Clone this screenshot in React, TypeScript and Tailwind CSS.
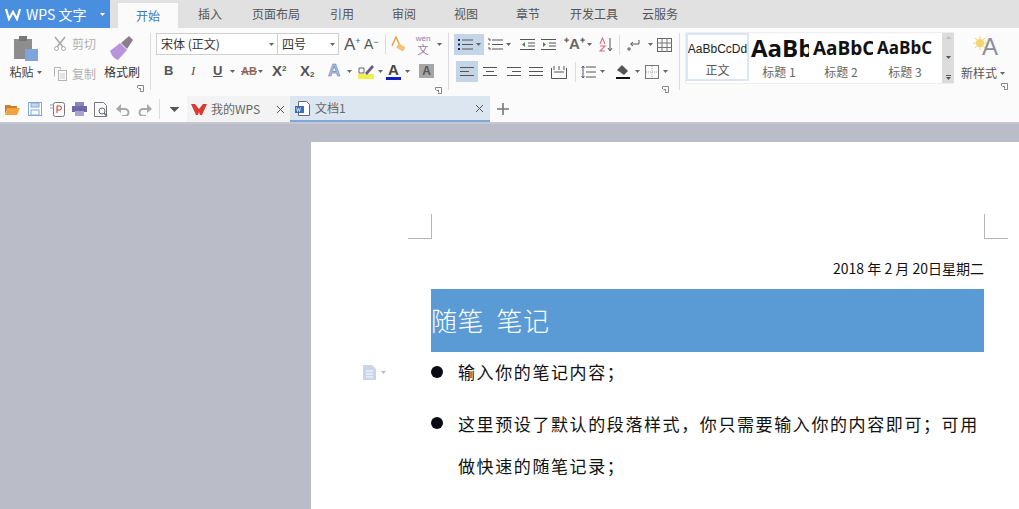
import type { ReactNode } from "react";

const cjk = "font-['Noto_Sans_CJK_SC','Liberation_Sans',sans-serif]";

function Caret({ className = "ml-[3px]", color = "#666" }: { className?: string; color?: string }) {
  return (
    <svg width="5" height="3" viewBox="0 0 5 3" className={`shrink-0 ${className}`}>
      <path d="M0 0h5L2.5 3z" fill={color} />
    </svg>
  );
}

function Icon({ w, h = 16, className = "", children }: { w: number; h?: number; className?: string; children: ReactNode }) {
  return (
    <svg width={w} height={h} viewBox={`0 0 ${w} ${h}`} className={`shrink-0 ${className}`} fill="none">
      {children}
    </svg>
  );
}

function Launcher({ className = "" }: { className?: string }) {
  return (
    <svg width="7" height="7" viewBox="0 0 7 7" className={`shrink-0 ${className}`} fill="none">
      <path d="M.5 3V.5h6v6H3" stroke="#888" />
      <path d="M1.5 3.5h2v2" stroke="#777" />
    </svg>
  );
}

function Sep({ className = "" }: { className?: string }) {
  return <div className={`w-px bg-[#dcdcdc] shrink-0 ${className}`} />;
}

function Lines({ short, align }: { short: number; align: string }) {
  return (
    <div className={`flex flex-col gap-[3px] w-[14px] ${align}`}>
      <div className="h-px w-[14px] bg-[#555]" />
      <div className="h-px bg-[#555]" style={{ width: short }} />
      <div className="h-px w-[14px] bg-[#555]" />
    </div>
  );
}

function StyleCell({ sample, label, className, width }: { sample: string; label: string; className: string; width: string }) {
  return (
    <div className={`${width} h-full flex flex-col items-center overflow-hidden shrink-0`}>
      <div className={`h-[30px] w-full flex items-center overflow-hidden whitespace-nowrap text-[#111] font-['Open_Sans',sans-serif] ${className}`}>
        {sample}
      </div>
      <div className={`text-[12px] leading-[16px] text-[#666] mt-[1px] ${cjk}`}>{label}</div>
    </div>
  );
}

function Ribbon() {
  return (
    <div className={`h-[68px] bg-[#fbfbfb] flex text-[#444] ${cjk}`}>
      {/* clipboard */}
      <div className="w-[150px] shrink-0 pl-[8px] pt-[7px] flex relative">
        <div className="w-[35px] flex flex-col items-center">
          <Icon w={26} h={27}>
            <rect x="1" y="4" width="18" height="20" fill="#8d8d8d" />
            <rect x="6" y="1" width="8" height="5" fill="#777" />
            <rect x="12" y="14" width="13" height="12" fill="#7fa6d8" />
          </Icon>
          <div className="text-[12px] leading-[16px] mt-[2px] flex items-center whitespace-nowrap">
            粘贴<Caret />
          </div>
        </div>
        <div className="ml-[10px] w-[44px] flex flex-col gap-[15px] pt-[1px] text-[12px] leading-[14px] text-[#b0b0b0]">
          <div className="flex items-center gap-[5px] whitespace-nowrap">
            <Icon w={14} h={15}>
              <path d="M2 1l8 10M12 1L4 11" stroke="#a9a9a9" strokeWidth="1.6" />
              <circle cx="3.5" cy="12.5" r="2" stroke="#a9a9a9" />
              <circle cx="10.5" cy="12.5" r="2" stroke="#a9a9a9" />
            </Icon>
            剪切
          </div>
          <div className="flex items-center gap-[5px] whitespace-nowrap">
            <Icon w={14} h={15}>
              <path d="M1.5 10.5v-9h6v2" stroke="#b5b5b5" />
              <rect x="5.5" y="4.5" width="8" height="10" stroke="#b5b5b5" />
              <path d="M7 8h5M7 10h5M7 12h5" stroke="#ccc" />
            </Icon>
            复制
          </div>
        </div>
        <div className="ml-[7px] w-[36px] flex flex-col items-center">
          <Icon w={26} h={27}>
            <path d="M1 16l10-8 7 7-9 10q-5-1-8-9z" fill="#b794dc" />
            <path d="M12 8l8-7 4 4-6 9z" fill="#8b7d8c" />
          </Icon>
          <div className="text-[12px] leading-[16px] mt-[2px] whitespace-nowrap text-[#333]">格式刷</div>
        </div>
        <Launcher className="self-end mb-[4px] ml-[-3px]" />
      </div>
      <Sep className="mt-[5px] mb-[6px]" />

      {/* font */}
      <div className="w-[297px] shrink-0 pl-[5px] pt-[5px] flex flex-col">
        <div className="flex items-center h-[22px]">
          <div className="w-[122px] h-[22px] border border-[#cfcfcf] bg-white flex items-center justify-between pl-[4px] pr-[3px] text-[12px] text-[#333]">
            宋体 (正文)<Caret />
          </div>
          <div className="w-[61px] h-[22px] border border-l-0 border-[#cfcfcf] bg-white flex items-center justify-between pl-[4px] pr-[3px] text-[12px] text-[#333]">
            四号<Caret />
          </div>
          <div className="ml-[5px] w-[18px] text-[17px] leading-none text-[#555] font-['Liberation_Sans',sans-serif]">
            A<sup className="text-[9px] -top-[6px]">+</sup>
          </div>
          <div className="ml-[2px] w-[18px] text-[14px] leading-none text-[#555] font-['Liberation_Sans',sans-serif]">
            A<sup className="text-[9px] -top-[4px]">−</sup>
          </div>
          <Sep className="h-[20px] ml-[3px]" />
          <Icon w={16} className="ml-[5px]">
            <path d="M1 10L5 1l4 9" stroke="#e0a040" strokeWidth="1.4" />
            <rect x="6" y="9" width="8" height="5" rx="1" transform="rotate(30 10 11)" fill="#f2c27a" />
          </Icon>
          <div className="ml-[6px] flex items-center">
            <div className="w-[20px] flex flex-col items-center text-[#8f7aa8]">
              <span className="text-[8px] leading-[9px] font-['Liberation_Sans',sans-serif]">wén</span>
              <span className="text-[11px] leading-[12px]">文</span>
            </div>
            <Caret className="ml-[4px]" />
          </div>
        </div>
        <div className="flex items-center h-[24px] mt-[4px] font-['Liberation_Sans',sans-serif] text-[#555]">
          <span className="ml-[8px] w-[12px] text-[13px] font-bold">B</span>
          <span className="ml-[15px] w-[10px] text-[13px] italic font-['Liberation_Serif',serif]">I</span>
          <span className="ml-[12px] w-[12px] text-[13px] font-bold underline">U</span>
          <Caret className="ml-[5px]" />
          <span className="ml-[6px] w-[16px] text-[11px] font-bold line-through text-[#9a6a5a]">AB</span>
          <Caret className="ml-[1px]" />
          <span className="ml-[9px] w-[16px] text-[15px] font-bold">
            X<sup className="text-[8px] -top-[5px]">2</sup>
          </span>
          <span className="ml-[12px] w-[16px] text-[15px] font-bold">
            X<sub className="text-[8px] -bottom-[1px]">2</sub>
          </span>
          <span className="ml-[12px] w-[16px] text-[17px] font-bold text-[#a9bde2] [-webkit-text-stroke:0.5px_#5577bb]">A</span>
          <Caret className="ml-[3px]" />
          <Icon w={17} h={18} className="ml-[6px]">
            <rect x="0" y="12" width="16" height="5" fill="#f4ee4c" />
            <path d="M7 11l7-8 2 2-7 8z" fill="#6b5a7a" />
            <path d="M1 6h5v5H1z" stroke="#666" />
          </Icon>
          <Caret className="ml-[3px]" />
          <div className="ml-[3px] w-[15px] flex flex-col items-center text-[15px] leading-[14px] font-bold text-[#444]">
            A<div className="w-[15px] h-[3px] bg-[#1020c0]" />
          </div>
          <Caret className="ml-[4px]" />
          <div className="ml-[9px] w-[15px] h-[14px] bg-[#a6a6a6] flex items-center justify-center text-[12px] font-bold text-[#555]">A</div>
        </div>
        <Launcher className="self-end mt-[4px] mr-[6px]" />
      </div>
      <Sep className="mt-[5px] mb-[6px]" />

      {/* paragraph */}
      <div className="w-[230px] shrink-0 pl-[5px] pt-[6px] flex flex-col">
        <div className="flex items-center h-[21px]">
          <div className="w-[30px] h-[21px] bg-[#c5d5e8] flex items-center justify-center gap-[2px]">
            <Icon w={17} h={13}>
              <path d="M1 2h2M1 6.5h2M1 11h2" stroke="#225" strokeWidth="2" />
              <path d="M5 2h11M5 6.5h11M5 11h11" stroke="#555" />
            </Icon>
            <Caret className="" />
          </div>
          <div className="ml-[2px] w-[26px] flex items-center justify-center gap-[2px]">
            <Icon w={17} h={13}>
              <path d="M1 1h2v2M1 6h2M1 10h2v2" stroke="#555" />
              <path d="M5 2h11M5 6.5h11M5 11h11" stroke="#555" />
            </Icon>
            <Caret className="" />
          </div>
          <Icon w={15} h={13} className="ml-[8px]">
            <path d="M0 1.5h15M8 5h7M8 8h7M0 11.5h15" stroke="#555" />
            <path d="M5 4L2 6.5 5 9z" fill="#4a8a4a" />
          </Icon>
          <Icon w={15} h={13} className="ml-[6px]">
            <path d="M0 1.5h15M8 5h7M8 8h7M0 11.5h15" stroke="#555" />
            <path d="M2 4l3 2.5L2 9z" fill="#4a8a4a" />
          </Icon>
          <div className="ml-[8px] w-[21px] flex items-center text-[15px] font-bold text-[#666] font-['Liberation_Sans',sans-serif]">
            <span>⁺A⁺</span>
          </div>
          <Caret className="ml-[2px]" />
          <Icon w={15} className="ml-[7px]">
            <path d="M1 7l2.5-6L6 7M1 9h5L1 14h5" stroke="#d8708a" strokeWidth="1.1" />
            <path d="M11 1v12M9 11l2 3 2-3" stroke="#555" />
          </Icon>
          <Sep className="h-[20px] ml-[5px]" />
          <Icon w={15} h={14} className="ml-[6px]">
            <path d="M13 2v4H5M7 4L4.5 6 7 8" stroke="#555" />
            <path d="M3 9v4M1 11h4" stroke="#555" />
          </Icon>
          <Caret className="ml-[7px]" />
          <Icon w={15} h={14} className="ml-[4px]">
            <rect x=".5" y=".5" width="14" height="13" stroke="#666" />
            <path d="M5 0v14M10 0v14M0 5h15M0 9.5h15" stroke="#777" />
          </Icon>
        </div>
        <div className="flex items-center h-[21px] mt-[6px]">
          <div className="ml-[2px] w-[22px] h-[21px] bg-[#c5d5e8] flex items-center justify-start pl-[4px]">
            <Lines short={9} align="items-start" />
          </div>
          <div className="ml-[5px]"><Lines short={8} align="items-center" /></div>
          <div className="ml-[10px]"><Lines short={9} align="items-end" /></div>
          <div className="ml-[8px]"><Lines short={14} align="items-center" /></div>
          <Icon w={16} h={14} className="ml-[8px]">
            <path d="M.5 3v10.5h15V3" stroke="#555" />
            <path d="M3 7h10M3 1v4M8 1v4M13 1v4" stroke="#555" />
          </Icon>
          <Sep className="h-[20px] ml-[8px]" />
          <Icon w={15} h={14} className="ml-[5px]">
            <path d="M5 2h10M5 7h10M5 12h10" stroke="#555" />
            <path d="M2 1v12M.5 3L2 1l1.5 2M.5 11L2 13l1.5-2" stroke="#557" />
          </Icon>
          <Caret className="ml-[4px]" />
          <Icon w={15} h={17} className="ml-[10px]">
            <path d="M2 7l5-5 6 6-4 4z" fill="#555" />
            <path d="M1 15h14" stroke="#111" strokeWidth="2" />
          </Icon>
          <Caret className="ml-[5px]" />
          <Icon w={14} h={14} className="ml-[5px]">
            <rect x=".5" y=".5" width="13" height="13" stroke="#777" />
            <path d="M7 1v12M1 7h12" stroke="#aaa" strokeDasharray="1 1" />
          </Icon>
          <Caret className="ml-[4px]" />
        </div>
        <Launcher className="self-end mt-[4px] mr-[10px]" />
      </div>
      <Sep className="mt-[5px] mb-[6px]" />

      {/* styles */}
      <div className="flex-1 pl-[5px] pt-[4px] flex">
        <div className="w-[269px] h-[52px] bg-[#eeeeee] p-[1px] pr-0 flex">
          <div className="flex-1 bg-white flex p-0 overflow-hidden">
            <div className="w-[63px] h-[48px] border-2 border-[#dbe5f5] shrink-0 flex flex-col items-center overflow-hidden">
              <div className="h-[27px] flex items-center whitespace-nowrap text-[12px] text-[#222] font-['Liberation_Sans',sans-serif]">AaBbCcDd</div>
              <div className={`text-[12px] leading-[16px] text-[#555] ${cjk}`}>正文</div>
            </div>
            <StyleCell sample="AaBb" label="标题 1" width="w-[60px]" className="text-[24px] font-bold pl-[2px]" />
            <StyleCell sample="AaBbC" label="标题 2" width="w-[64px]" className="text-[19px] font-bold pl-[4px]" />
            <StyleCell sample="AaBbC" label="标题 3" width="w-[64px]" className="text-[17px] font-bold pl-[4px]" />
          </div>
          <div className="w-[12px] flex flex-col items-center justify-between bg-[#dcdcdc] py-[3px]">
            <Caret className="rotate-180" color="#bbb" />
            <Caret className="" color="#555" />
            <div className="flex flex-col items-center gap-[1px]">
              <div className="w-[5px] h-px bg-[#555]" />
              <Caret className="" color="#555" />
            </div>
          </div>
        </div>
        <div className="ml-[5px] w-[48px] flex flex-col items-center pt-[2px]">
          <div className="flex items-end h-[26px] ml-[5px]">
            <Icon w={14} h={14} className="mb-[10px] mr-[-5px]">
              <circle cx="7" cy="7" r="4" fill="#f5d56b" />
              <path d="M7 0v14M0 7h14M2 2l10 10M12 2L2 12" stroke="#f5d56b" />
            </Icon>
            <span className="text-[24px] leading-[26px] font-['Liberation_Sans',sans-serif] text-[#8a8f99]">A</span>
          </div>
          <div className="mt-[5px] text-[12px] leading-[16px] whitespace-nowrap flex items-center text-[#555]">
            新样式<Caret />
          </div>
          <Launcher className="self-end mt-[2px] mr-[-1px]" />
        </div>
      </div>
    </div>
  );
}

function QuickBar() {
  return (
    <div className={`h-[26px] bg-[#fbfbfb] flex items-stretch text-[12px] text-[#666] ${cjk}`}>
      <div className="w-[187px] shrink-0 pl-[5px] flex items-center">
        <Icon w={15} h={12}>
          <path d="M0 2h5l1 1h6v2H3L0 11z" fill="#c97f2c" />
          <path d="M3 5h12l-3 7H0z" fill="#f2a33c" />
        </Icon>
        <Icon w={14} h={14} className="ml-[8px]">
          <rect x=".5" y=".5" width="13" height="13" fill="#fff" stroke="#7fa6d8" />
          <rect x="3" y="1" width="8" height="4" fill="#c6d6ee" stroke="#7fa6d8" />
          <rect x="3" y="8" width="8" height="5" stroke="#7fa6d8" />
        </Icon>
        <Icon w={15} h={15} className="ml-[8px]">
          <rect x="3.5" y=".5" width="11" height="14" rx="2" stroke="#777" />
          <path d="M7 11V4h2.5a1.8 1.8 0 010 4H7" stroke="#c9412f" />
          <path d="M0 3h4M0 6h4" stroke="#999" />
        </Icon>
        <Icon w={15} h={14} className="ml-[7px]">
          <rect x="3" y="0" width="9" height="4" fill="#8c84bb" />
          <rect x="0" y="4" width="15" height="6" fill="#6f68a6" />
          <rect x="3" y="9" width="9" height="5" fill="#a8a3cf" />
        </Icon>
        <Icon w={14} h={15} className="ml-[7px]">
          <path d="M.5.5h9l3 3v11H.5z" stroke="#777" />
          <circle cx="8" cy="9" r="3" stroke="#667" />
          <path d="M10 11l3 3" stroke="#667" strokeWidth="1.5" />
        </Icon>
        <Icon w={14} h={13} className="ml-[8px]">
          <path d="M1 6h8a3.5 3.5 0 010 7H6" stroke="#a8a8a8" strokeWidth="2" />
          <path d="M5 1L0 6l5 4z" fill="#a8a8a8" />
        </Icon>
        <Icon w={14} h={13} className="ml-[8px]">
          <path d="M13 6H5a3.5 3.5 0 000 7h3" stroke="#a8a8a8" strokeWidth="2" />
          <path d="M9 1l5 5-5 4z" fill="#a8a8a8" />
        </Icon>
        <Sep className="h-[20px] ml-[7px]" />
        <Caret className="ml-[12px] scale-x-[2] scale-y-[1.6]" color="#555" />
      </div>
      <div className="w-[103px] shrink-0 bg-[#f3f3f3] flex items-center pl-[4px] pr-[5px]">
        <Icon w={16} h={13}>
          <path d="M0 1h4l4 5 4-5h4l-5 11H9L8 9l-1 3H5z" fill="#d83a34" />
        </Icon>
        <span className="ml-[4px] flex-1 whitespace-nowrap">我的WPS</span>
        <Icon w={9} h={9}>
          <path d="M1 1l7 7M8 1L1 8" stroke="#555" />
        </Icon>
      </div>
      <div className="w-[200px] shrink-0 bg-[#dce6f0] border-b-2 border-[#7fa8d8] flex items-center pl-[5px] pr-[6px]">
        <Icon w={15} h={15}>
          <path d="M3.5.5h8l3 3v11h-11z" fill="#fff" stroke="#667" />
          <rect x="0" y="5" width="9" height="7" fill="#3c6fb8" />
          <path d="M1.5 6.5l1 4 1-3 1 3 1-4" stroke="#fff" strokeWidth=".7" />
        </Icon>
        <span className="ml-[5px] flex-1 whitespace-nowrap">文档1</span>
        <Icon w={9} h={9}>
          <path d="M1 1l7 7M8 1L1 8" stroke="#555" />
        </Icon>
      </div>
      <div className="ml-[6px] flex items-center">
        <Icon w={14} h={14}>
          <path d="M7 1v12M1 7h12" stroke="#777" strokeWidth="1.6" />
        </Icon>
      </div>
    </div>
  );
}

function Corner({ side }: { side: "left" | "right" }) {
  return (
    <div className={`w-[24px] h-[25px] border-b border-[#b5b5b5] ${side === "left" ? "border-r" : "border-l"}`} />
  );
}

export default function App() {
  return (
    <div className={`w-[1019px] h-[509px] overflow-hidden flex flex-col bg-[#babdc7] ${cjk}`}>
      <div className="h-[28px] bg-[#e1e1e1] flex shrink-0">
        <div className="w-[110px] bg-[#4a8fdf] flex items-center pl-[5px] text-white text-[14px] whitespace-nowrap">
          <Icon w={16} h={13}>
            <path d="M1 1l3 10 4-7 4 7 3-10" stroke="#fff" strokeWidth="2.2" />
          </Icon>
          <span className="ml-[5px]">WPS 文字</span>
          <Caret className="ml-[14px]" color="#fff" />
        </div>
        <div className="ml-[8px] w-[60px] mt-[3px] bg-[#fbfbfb] flex items-center justify-center text-[12px] text-[#3a78b8]">开始</div>
        <div className="flex items-center text-[12px] text-[#555] whitespace-nowrap">
          <span className="ml-[20px]">插入</span>
          <span className="ml-[30px]">页面布局</span>
          <span className="ml-[30px]">引用</span>
          <span className="ml-[38px]">审阅</span>
          <span className="ml-[38px]">视图</span>
          <span className="ml-[38px]">章节</span>
          <span className="ml-[30px]">开发工具</span>
          <span className="ml-[24px]">云服务</span>
        </div>
      </div>
      <Ribbon />
      <QuickBar />
      <div className="h-[2px] bg-[#c4c6d2] shrink-0" />
      <div className="flex-1 pl-[311px] pt-[18px] overflow-hidden">
        <div className="w-[708px] h-[400px] bg-white pt-[72px] pl-[97px] pr-[11px]">
          <div className="flex justify-between">
            <Corner side="left" />
            <Corner side="right" />
          </div>
          <div className="pl-[23px] pr-[24px]">
            <div className="mt-[19px] text-right text-[14px] leading-[20px] text-[#111] whitespace-nowrap">
              2018 年 2 月 20日星期二
            </div>
            <div className="mt-[11px] h-[63px] bg-[#5b9bd5] flex items-center pb-[2px] text-[26px] tracking-[0.5px] font-light text-white whitespace-pre">
              随笔  笔记
            </div>
            <div className="relative mt-[6px] h-[28px] flex items-center text-[17px] tracking-[1.6px] text-[#111]">
              <div className="absolute left-[-68px] top-[7px] flex items-center">
                <Icon w={13} h={15}>
                  <path d="M0 0h9l4 4v11H0z" fill="#c9d6e8" />
                  <path d="M3 6h7M3 9h7M3 12h7" stroke="#fff" />
                </Icon>
                <Caret className="ml-[5px]" color="#bbb" />
              </div>
              <div className="w-[12px] h-[12px] rounded-full bg-[#0b0b14] shrink-0" />
              <span className="ml-[15px]">输入你的笔记内容；</span>
            </div>
            <div className="mt-[17px] flex items-start text-[17px] tracking-[1.6px] leading-[42px] text-[#111]">
              <div className="w-[12px] h-[12px] rounded-full bg-[#0b0b14] shrink-0 mt-[14px]" />
              <span className="ml-[15px] whitespace-nowrap">
                这里预设了默认的段落样式，你只需要输入你的内容即可；可用
                <br />
                做快速的随笔记录；
              </span>
            </div>
          </div>
        </div>
      </div>
    </div>
  );
}
